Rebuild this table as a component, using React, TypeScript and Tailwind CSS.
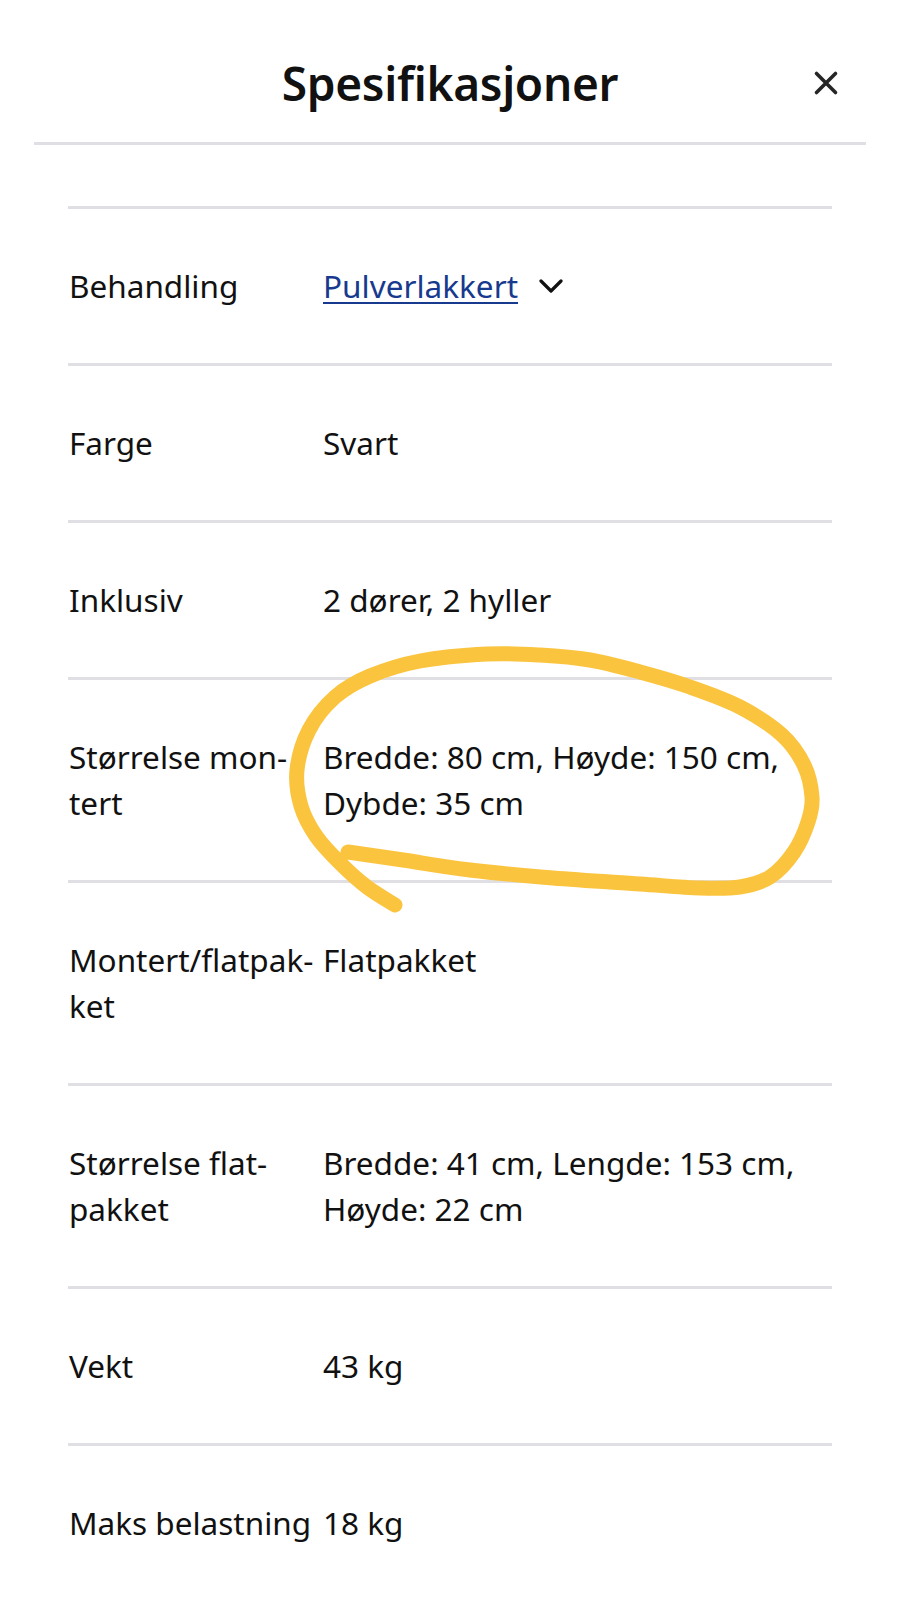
import React from "react";

type Row = { label: string[]; value: React.ReactNode };

const pts: [number, number][] = [
  [348, 852], [403, 860], [470, 870], [553, 878], [640, 884], [700, 888],
  [740, 887], [770, 877], [794, 852], [808, 822], [812, 797], [804, 765],
  [782, 735], [740, 707], [690, 687], [640, 672], [590, 660], [540, 655],
  [487, 654], [420, 661], [370, 676], [335, 697], [309, 730], [297, 770],
  [301, 806], [316, 836], [340, 863], [367, 887], [395, 905],
];

function catmull(p: [number, number][]): string {
  let d = `M ${p[0][0]} ${p[0][1]}`;
  for (let i = 0; i < p.length - 1; i++) {
    const p0 = p[i - 1] || p[i];
    const p1 = p[i];
    const p2 = p[i + 1];
    const p3 = p[i + 2] || p2;
    const c1x = p1[0] + (p2[0] - p0[0]) / 6;
    const c1y = p1[1] + (p2[1] - p0[1]) / 6;
    const c2x = p2[0] - (p3[0] - p1[0]) / 6;
    const c2y = p2[1] - (p3[1] - p1[1]) / 6;
    d += ` C ${c1x.toFixed(1)} ${c1y.toFixed(1)} ${c2x.toFixed(1)} ${c2y.toFixed(1)} ${p2[0]} ${p2[1]}`;
  }
  return d;
}

const loopPath = catmull(pts);

function Lines({ lines }: { lines: string[] }) {
  return (
    <>
      {lines.map((l, i) => (
        <div key={i} className="whitespace-nowrap">
          {l}
        </div>
      ))}
    </>
  );
}

export default function App() {
  const rows: Row[] = [
    {
      label: ["Behandling"],
      value: (
        <div className="flex items-center">
          <span className="text-[#173a8e] underline decoration-[2px] underline-offset-[4px]">
            Pulverlakkert
          </span>
          <svg
            className="ml-[21px]"
            width="24"
            height="16"
            viewBox="0 0 24 16"
            fill="none"
          >
            <polyline
              points="2,3 12,13 22,3"
              stroke="#111111"
              strokeWidth="3.2"
              strokeLinecap="round"
              strokeLinejoin="round"
            />
          </svg>
        </div>
      ),
    },
    { label: ["Farge"], value: <Lines lines={["Svart"]} /> },
    { label: ["Inklusiv"], value: <Lines lines={["2 dører, 2 hyller"]} /> },
    {
      label: ["Størrelse mon-", "tert"],
      value: <Lines lines={["Bredde: 80 cm, Høyde: 150 cm,", "Dybde: 35 cm"]} />,
    },
    {
      label: ["Montert/flatpak-", "ket"],
      value: <Lines lines={["Flatpakket"]} />,
    },
    {
      label: ["Størrelse flat-", "pakket"],
      value: (
        <Lines lines={["Bredde: 41 cm, Lengde: 153 cm,", "Høyde: 22 cm"]} />
      ),
    },
    { label: ["Vekt"], value: <Lines lines={["43 kg"]} /> },
    { label: ["Maks belastning"], value: <Lines lines={["18 kg"]} /> },
  ];

  return (
    <div
      className="relative min-h-[1600px] w-[900px] overflow-hidden bg-white text-[#111111]"
      style={{ fontFamily: '"Noto Sans", "Open Sans", Arial, sans-serif' }}
    >
      <div className="px-[34px]">
        <header className="grid grid-cols-[1fr_auto_1fr] items-center border-b-[3px] border-[#e0e0e4] pt-[57px] pb-[33px]">
          <div />
          <h1 className="text-[46px] font-semibold leading-[52px] tracking-[-0.3px] text-[#111111]">
            Spesifikasjoner
          </h1>
          <div className="flex justify-end pr-[27px]">
            <svg width="26" height="26" viewBox="0 0 26 26" fill="none">
              <path
                d="M3.5 3.5 L22.5 22.5 M22.5 3.5 L3.5 22.5"
                stroke="#262626"
                strokeWidth="3.6"
                strokeLinecap="round"
              />
            </svg>
          </div>
        </header>

        <div className="px-[34px] pt-[61px]">
          <div className="border-t-[3px] border-[#e0e0e4]">
            {rows.map((r, i) => (
              <div
                key={i}
                className="flex border-b-[3px] border-[#e0e0e4] pt-[54px] pb-[54px] text-[31.5px] leading-[46px]"
              >
                <div className="w-[255px] shrink-0 pl-[1px]">
                  <Lines lines={r.label} />
                </div>
                <div className="flex-1">{r.value}</div>
              </div>
            ))}
          </div>
        </div>
      </div>

      <svg
        className="pointer-events-none absolute left-0 top-0"
        width="900"
        height="1600"
        viewBox="0 0 900 1600"
        fill="none"
      >
        <path
          d={loopPath}
          stroke="#fbc43f"
          strokeWidth="15"
          strokeLinecap="round"
          strokeLinejoin="round"
        />
      </svg>
    </div>
  );
}
